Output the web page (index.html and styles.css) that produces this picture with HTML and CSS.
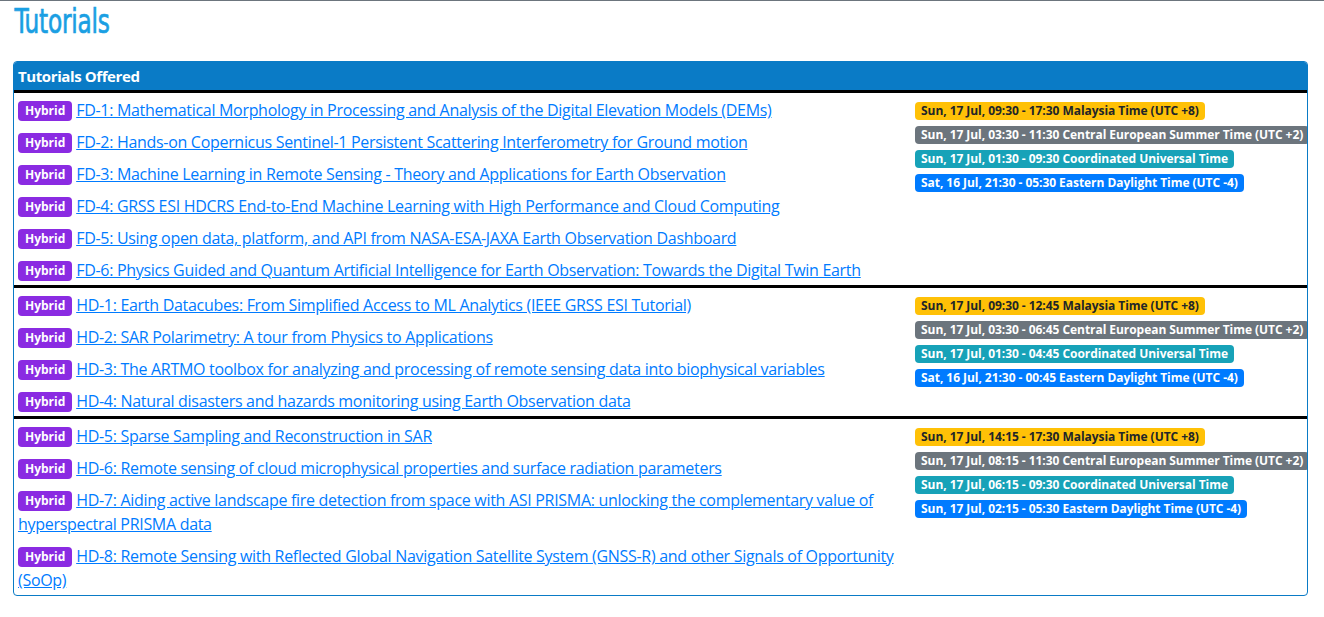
FILE: index.html
```html
<!DOCTYPE html>
<html lang="en">
<head>
<meta charset="utf-8">
<title>Tutorials</title>
<link rel="stylesheet" href="styles.css">
</head>
<body>
<div class="page">
  <h1 class="page-title"><span>Tutorials</span></h1>
  <div class="card">
    <div class="card-header">Tutorials Offered</div>
    <table class="tut-table">
      <colgroup><col class="col-titles"><col class="col-times"></colgroup>
      <tbody>
        <tr>
          <td class="titles">
            <div class="item"><span class="badge hybrid">Hybrid</span> <a href="#">FD-1: Mathematical Morphology in Processing and Analysis of the Digital Elevation Models (DEMs)</a></div>
            <div class="item"><span class="badge hybrid">Hybrid</span> <a href="#">FD-2: Hands-on Copernicus Sentinel-1 Persistent Scattering Interferometry for Ground motion</a></div>
            <div class="item"><span class="badge hybrid">Hybrid</span> <a href="#">FD-3: Machine Learning in Remote Sensing - Theory and Applications for Earth Observation</a></div>
            <div class="item"><span class="badge hybrid">Hybrid</span> <a href="#">FD-4: GRSS ESI HDCRS End-to-End Machine Learning with High Performance and Cloud Computing</a></div>
            <div class="item"><span class="badge hybrid">Hybrid</span> <a href="#">FD-5: Using open data, platform, and API from NASA-ESA-JAXA Earth Observation Dashboard</a></div>
            <div class="item"><span class="badge hybrid">Hybrid</span> <a href="#">FD-6: Physics Guided and Quantum Artificial Intelligence for Earth Observation: Towards the Digital Twin Earth</a></div>
          </td>
          <td class="times">
            <div class="tline"><span class="badge t-warning">Sun, 17 Jul, 09:30 - 17:30 Malaysia Time (UTC +8)</span></div>
            <div class="tline"><span class="badge t-secondary">Sun, 17 Jul, 03:30 - 11:30 Central European Summer Time (UTC +2)</span></div>
            <div class="tline"><span class="badge t-info">Sun, 17 Jul, 01:30 - 09:30 Coordinated Universal Time</span></div>
            <div class="tline"><span class="badge t-primary">Sat, 16 Jul, 21:30 - 05:30 Eastern Daylight Time (UTC -4)</span></div>
          </td>
        </tr>
        <tr>
          <td class="titles">
            <div class="item"><span class="badge hybrid">Hybrid</span> <a href="#">HD-1: Earth Datacubes: From Simplified Access to ML Analytics (IEEE GRSS ESI Tutorial)</a></div>
            <div class="item"><span class="badge hybrid">Hybrid</span> <a href="#">HD-2: SAR Polarimetry: A tour from Physics to Applications</a></div>
            <div class="item"><span class="badge hybrid">Hybrid</span> <a href="#">HD-3: The ARTMO toolbox for analyzing and processing of remote sensing data into biophysical variables</a></div>
            <div class="item"><span class="badge hybrid">Hybrid</span> <a href="#">HD-4: Natural disasters and hazards monitoring using Earth Observation data</a></div>
          </td>
          <td class="times">
            <div class="tline"><span class="badge t-warning">Sun, 17 Jul, 09:30 - 12:45 Malaysia Time (UTC +8)</span></div>
            <div class="tline"><span class="badge t-secondary">Sun, 17 Jul, 03:30 - 06:45 Central European Summer Time (UTC +2)</span></div>
            <div class="tline"><span class="badge t-info">Sun, 17 Jul, 01:30 - 04:45 Coordinated Universal Time</span></div>
            <div class="tline"><span class="badge t-primary">Sat, 16 Jul, 21:30 - 00:45 Eastern Daylight Time (UTC -4)</span></div>
          </td>
        </tr>
        <tr>
          <td class="titles">
            <div class="item"><span class="badge hybrid">Hybrid</span> <a href="#">HD-5: Sparse Sampling and Reconstruction in SAR</a></div>
            <div class="item"><span class="badge hybrid">Hybrid</span> <a href="#">HD-6: Remote sensing of cloud microphysical properties and surface radiation parameters</a></div>
            <div class="item"><span class="badge hybrid">Hybrid</span> <a href="#">HD-7: Aiding active landscape fire detection from space with ASI PRISMA: unlocking the complementary value of hyperspectral PRISMA data</a></div>
            <div class="item"><span class="badge hybrid">Hybrid</span> <a href="#">HD-8: Remote Sensing with Reflected Global Navigation Satellite System (GNSS-R) and other Signals of Opportunity (SoOp)</a></div>
          </td>
          <td class="times">
            <div class="tline"><span class="badge t-warning">Sun, 17 Jul, 14:15 - 17:30 Malaysia Time (UTC +8)</span></div>
            <div class="tline"><span class="badge t-secondary">Sun, 17 Jul, 08:15 - 11:30 Central European Summer Time (UTC +2)</span></div>
            <div class="tline"><span class="badge t-info">Sun, 17 Jul, 06:15 - 09:30 Coordinated Universal Time</span></div>
            <div class="tline"><span class="badge t-primary">Sun, 17 Jul, 02:15 - 05:30 Eastern Daylight Time (UTC -4)</span></div>
          </td>
        </tr>
      </tbody>
    </table>
  </div>
</div>
</body>
</html>
```

FILE: styles.css
```css
html, body {
  margin: 0;
  padding: 0;
  background: #ffffff;
}

body {
  border-top: 1px solid #6c757d;
  font-family: "Open Sans", "Noto Sans", sans-serif;
  font-size: 16px;
  color: #212529;
}

.page {
  padding: 0 16px 0 13px;
}

.page-title {
  margin: 0;
  height: 60px;
  font-family: "DejaVu Sans", sans-serif;
  font-stretch: condensed;
  font-weight: 400;
  font-size: 34px;
  line-height: 40px;
  color: #1a9fe3;
}

.page-title span {
  display: inline-block;
  transform: scaleX(0.76);
  transform-origin: left center;
  padding-left: 2px;
  letter-spacing: -0.3px;
  -webkit-text-stroke: 0.7px #1a9fe3;
}

.card {
  border: 1px solid #0a7bc6;
  border-radius: 4px;
  overflow: hidden;
}

.card-header {
  background: #0a7bc6;
  color: #ffffff;
  font-weight: 700;
  font-size: 15px;
  letter-spacing: -0.4px;
  line-height: 28px;
  padding: 0 4px;
  border-bottom: 3px solid #000000;
}

.tut-table {
  width: 100%;
  border-collapse: collapse;
  table-layout: fixed;
}

.col-titles {
  width: 897px;
}

.tut-table tr + tr td {
  border-top: 3px solid #000000;
}

.tut-table td {
  vertical-align: top;
  padding: 5px 4px 3px 4px;
}

.item {
  line-height: 24px;
  letter-spacing: -0.3px;
}

.item + .item {
  margin-top: 8px;
}

.item a {
  color: #007bff;
  text-decoration: underline;
}

.tline {
  line-height: 24px;
}

.badge {
  display: inline-block;
  font-weight: 700;
  font-size: 12px;
  line-height: 18px;
  padding: 0 6px;
  border-radius: 4px;
    vertical-align: 1px;
  white-space: nowrap;
  letter-spacing: -0.05px;
}

.hybrid {
  background: #8a2be2;
  color: #ffffff;
  line-height: 20px;
  padding: 0 7px;
  letter-spacing: 0;
}

.t-warning {
  background: #ffc107;
  color: #212529;
}

.t-secondary {
  background: #6c757d;
  color: #ffffff;
}

.t-info {
  background: #17a2b8;
  color: #ffffff;
}

.t-primary {
  background: #007bff;
  color: #ffffff;
}
```
